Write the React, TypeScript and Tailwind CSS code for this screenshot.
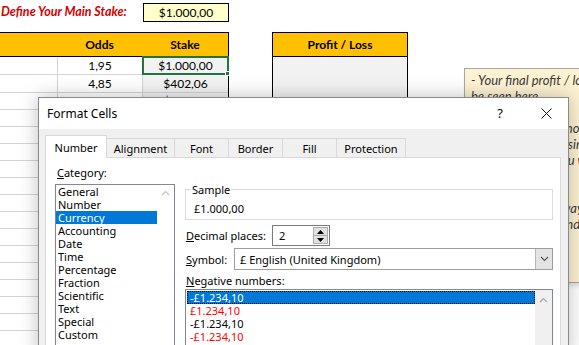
import React from "react";

const stakeRows = [
  { odds: "1,95", stake: "$1.000,00" },
  { odds: "4,85", stake: "$402,06" },
  { odds: "3,76", stake: "$519,16" },
  ...Array.from({ length: 14 }, () => ({ odds: "", stake: "" })),
];

const categories = [
  "General",
  "Number",
  "Currency",
  "Accounting",
  "Date",
  "Time",
  "Percentage",
  "Fraction",
  "Scientific",
  "Text",
  "Special",
  "Custom",
];

const negatives = [
  { label: "-£1.234,10", red: false },
  { label: "£1.234,10", red: true },
  { label: "-£1.234,10", red: false },
  { label: "-£1.234,10", red: true },
];

const tabs = [
  { label: "Number", w: "w-[62px]" },
  { label: "Alignment", w: "w-[69px]" },
  { label: "Font", w: "w-[55px]" },
  { label: "Border", w: "w-[55px]" },
  { label: "Fill", w: "w-[55px]" },
  { label: "Protection", w: "w-[70px]" },
];

// note lines, 16px apart; most of them sit under the dialog
const noteLines = [
  "- Your final profit / loss can",
  "be seen here",
  "",
  "- If the amount is not",
  "positive you are losing",
  "money on it, so you will",
  "",
  "",
  "- This is the best way",
  "to see the result and",
  "the final value of",
];

const ChevronUp = ({ color }: { color: string }) => (
  <svg width="9" height="6" viewBox="0 0 9 6" fill="none">
    <polyline points="1,5 4.5,1.5 8,5" stroke={color} strokeWidth="1.2" />
  </svg>
);

const Sheet = () => {
  return (
    <div className="font-['Lato',sans-serif] text-[12px] text-black">
      {/* stake input */}
      <div className="flex h-[32px] pt-[3px]">
        <div className="w-[143px] h-[19px] flex items-center whitespace-nowrap pl-[1px] text-[12.5px] font-bold italic text-[#d40000]">
          Define Your Main Stake:
        </div>
        <div className="w-[86px] h-[19px] border border-black bg-[#ffffcc] flex items-center justify-center">
          $1.000,00
        </div>
      </div>

      <div className="flex">
        {/* odds / stake table */}
        <div className="w-[229px] border-r border-black">
          <div className="h-[25px] flex bg-[#ffc000] border-y border-black font-bold">
            <div className="w-[57px]" />
            <div className="w-[85px] flex items-center justify-center">Odds</div>
            <div className="w-[86px] flex items-center justify-center">Stake</div>
          </div>
          {stakeRows.map((row, i) => (
            <div
              key={i}
              className={`flex border-b border-[#d4d4d4] ${i < 2 ? "h-[18px]" : "h-[17px]"}`}
            >
              <div className="w-[57px]" />
              <div className="w-[85px] border-l border-[#d4d4d4] flex items-center justify-center">
                {row.odds}
              </div>
              <div className="relative w-[86px] border-l border-[#d4d4d4] bg-[#f2f2f2] flex items-center justify-center">
                {row.stake}
                {i === 0 && (
                  <>
                    <div className="absolute -left-[1px] -top-[1px] -right-[1px] -bottom-[1px] border-2 border-[#217346]" />
                    <div className="absolute -right-[2px] -bottom-[2px] w-[5px] h-[5px] bg-[#217346] border border-white" />
                  </>
                )}
              </div>
            </div>
          ))}
        </div>

        {/* profit / loss */}
        <div className="ml-[43px] w-[136px] border-x border-black">
          <div className="h-[25px] bg-[#ffc000] border-y border-black font-bold flex items-center justify-center">
            Profit / Loss
          </div>
          <div className="h-[300px] bg-[#f2f2f2]" />
        </div>
      </div>
    </div>
  );
};

const Note = () => (
  <div className="absolute left-[464px] top-[68px] w-[130px] h-[215px] overflow-hidden border border-[#a6a6a6] bg-[#fdf2d2] pl-[6px] pt-[3px] font-['Lato',sans-serif] text-[13px] italic leading-[16px] text-[#3a3a3a] shadow-[2px_3px_4px_rgba(0,0,0,0.12)]">
    {noteLines.map((line, i) => (
      <div key={i} className="h-[16px] whitespace-nowrap">
        {line}
      </div>
    ))}
  </div>
);

const FormatCellsDialog = () => {
  return (
    <div className="absolute left-[38px] top-[97px] w-[531px] h-[260px] border border-[#8a8a8a] bg-[#f0f0f0] shadow-[0_0_18px_rgba(0,0,0,0.25)] font-['Noto_Sans',sans-serif] text-[11px] leading-[13px] text-black">
      {/* title bar */}
      <div className="h-[31px] bg-white flex items-center pl-[8px]">
        <span className="text-[12px]">Format Cells</span>
        <span className="ml-auto w-[12px] mr-[19px] text-center text-[13px]">?</span>
        <div className="w-[43px] flex justify-center">
          <svg width="11" height="11" viewBox="0 0 11 11">
            <line x1="0.5" y1="0.5" x2="10.5" y2="10.5" stroke="#111" strokeWidth="1" />
            <line x1="10.5" y1="0.5" x2="0.5" y2="10.5" stroke="#111" strokeWidth="1" />
          </svg>
        </div>
      </div>

      <div className="pl-[6px] pt-[6px]">
        {/* tabs */}
        <div className="flex items-end h-[22px]">
          {tabs.map((t, i) => (
            <div
              key={t.label}
              className={`${t.w} ${i > 0 ? "-ml-px" : ""} ${
                i === 0
                  ? "relative z-10 h-[23px] -mb-px bg-white"
                  : "h-[19px] bg-[#f0f0f0]"
              } border border-b-0 border-[#d9d9d9] flex items-center justify-center`}
            >
              {t.label}
            </div>
          ))}
        </div>

        {/* tab panel */}
        <div className="w-[516px] h-[200px] border border-[#d9d9d9] bg-white flex pl-[9px] pr-[7px]">
          {/* category */}
          <div className="w-[120px]">
            <div className="h-[26px] pt-[8px] pl-[2px]">
              <u>C</u>ategory:
            </div>
            <div className="h-[170px] border border-[#828790] bg-white flex">
              <div className="w-[101px]">
                {categories.map((c) => (
                  <div
                    key={c}
                    className={`h-[13px] pl-[2px] ${
                      c === "Currency" ? "bg-[#0078d7] text-white" : ""
                    }`}
                  >
                    {c}
                  </div>
                ))}
              </div>
              <div className="w-[17px] flex justify-center pt-[5px]">
                <ChevronUp color="#c4c4c4" />
              </div>
            </div>
          </div>

          {/* details */}
          <div className="ml-[10px] flex-1">
            <div className="relative mt-[31px] h-[31px] border border-[#dcdcdc]">
              <span className="absolute -top-[7px] left-[5px] bg-white px-[1px]">Sample</span>
              <div className="pt-[12px] pl-[8px]">£1.000,00</div>
            </div>

            <div className="mt-[5px] h-[21px] flex items-center">
              <div className="w-[87px] pl-[1px]">
                <u>D</u>ecimal places:
              </div>
              <div className="w-[58px] h-[21px] border border-[#7a7a7a] flex">
                <div className="flex-1 pl-[6px] flex items-center">2</div>
                <div className="w-[16px] flex flex-col py-[1px] pr-[1px]">
                  <div className="flex-1 border border-[#adadad] bg-[#e1e1e1] flex items-center justify-center">
                    <svg width="7" height="4" viewBox="0 0 7 4">
                      <polygon points="0,4 3.5,0 7,4" fill="#000" />
                    </svg>
                  </div>
                  <div className="flex-1 -mt-px border border-[#adadad] bg-[#e1e1e1] flex items-center justify-center">
                    <svg width="7" height="4" viewBox="0 0 7 4">
                      <polygon points="0,0 3.5,4 7,0" fill="#000" />
                    </svg>
                  </div>
                </div>
              </div>
            </div>

            <div className="mt-[2px] h-[22px] flex items-center">
              <div className="w-[49px] pl-[1px]">
                <u>S</u>ymbol:
              </div>
              <div className="flex-1 h-[22px] border border-[#9e9e9e] flex">
                <div className="flex-1 pl-[5px] flex items-center">£ English (United Kingdom)</div>
                <div className="w-[17px] bg-[#e3e3e3] border-l border-[#b9b9b9] flex items-center justify-center">
                  <svg width="9" height="6" viewBox="0 0 9 6" fill="none">
                    <polyline points="1,1 4.5,4.5 8,1" stroke="#555" strokeWidth="1.1" />
                  </svg>
                </div>
              </div>
            </div>

            <div className="h-[19px] pt-[4px] pl-[1px]">
              <u>N</u>egative numbers:
            </div>
            <div className="h-[60px] border border-[#828790] bg-white flex">
              <div className="flex-1 pt-[1px] pl-[1px]">
                {negatives.map((n, i) => (
                  <div
                    key={i}
                    className={`h-[13px] pl-[3px] ${
                      i === 0
                        ? "bg-[#0078d7] text-white outline-1 outline-dotted outline-black -outline-offset-1"
                        : n.red
                        ? "text-[#ff0000]"
                        : ""
                    }`}
                  >
                    {n.label}
                  </div>
                ))}
              </div>
              <div className="w-[17px] bg-[#f0f0f0] flex justify-center pt-[7px]">
                <ChevronUp color="#a6a6a6" />
              </div>
            </div>
          </div>
        </div>
      </div>
    </div>
  );
};

export default function App() {
  return (
    <div className="relative w-[579px] h-[345px] overflow-hidden bg-white">
      <Sheet />
      <Note />
      <FormatCellsDialog />
    </div>
  );
}
